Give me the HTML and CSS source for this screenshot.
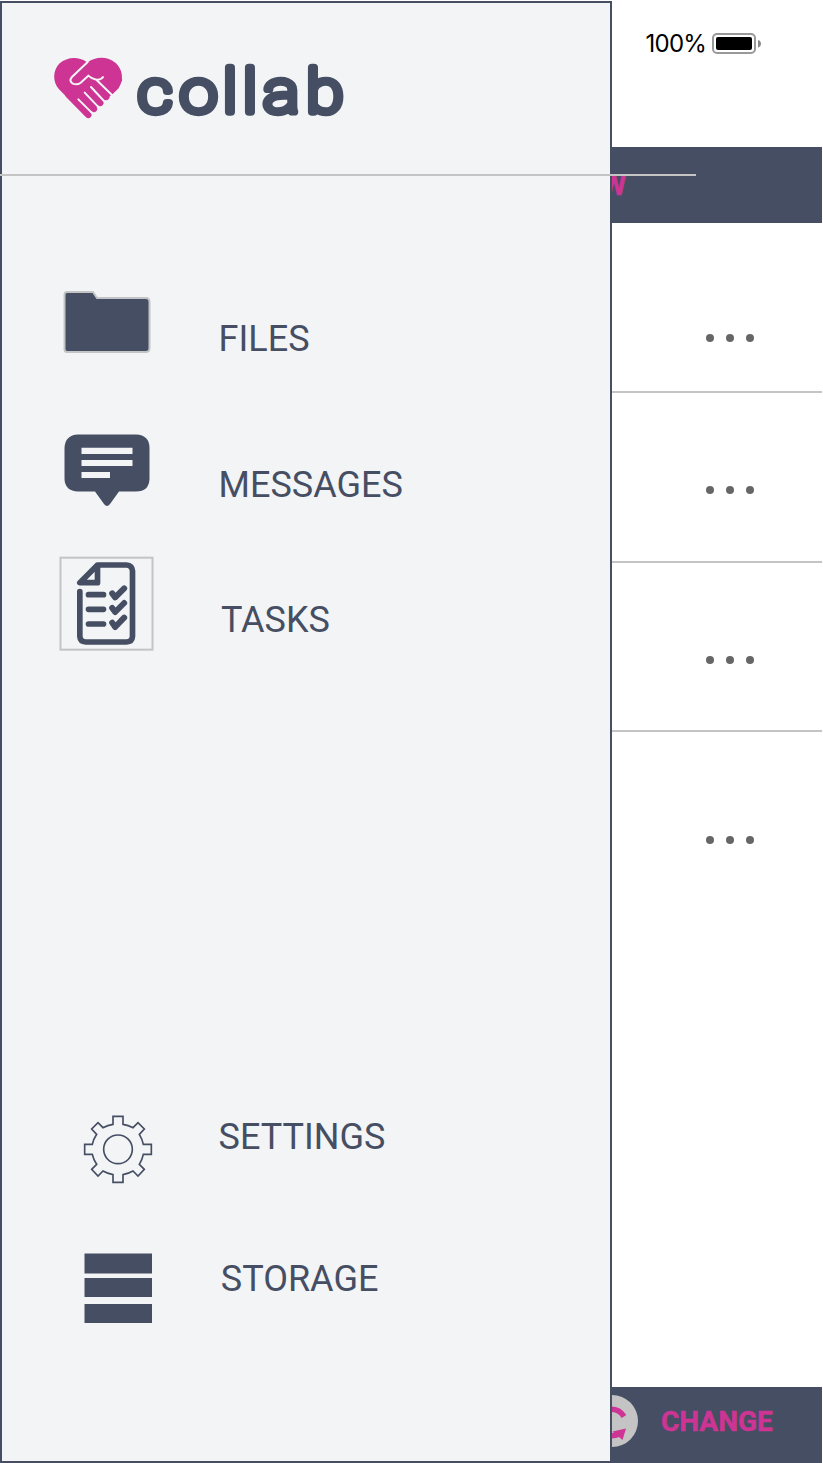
FILE: index.html
```html
<!DOCTYPE html>
<html lang="en">
<head>
<meta charset="utf-8">
<title>collab</title>
<link rel="stylesheet" href="styles.css">
</head>
<body>
<div class="app">
  <main class="page">
    <div class="status"><span>100%</span>
      <svg width="50" height="22" viewBox="0 0 50 22"><rect x="1" y="1" width="42" height="19" rx="4" fill="none" stroke="#999" stroke-width="2"/><rect x="4" y="4" width="36" height="13" rx="2"/><path d="M46 7q3 1 3 3.800t-3 3.800z" fill="#888"/></svg>
    </div>
    <header class="bar top-bar"><span class="bar-label">NEW</span></header>
    <section class="rows">
      <div class="row row-1"><i></i><i></i><i></i></div>
      <div class="row row-2"><i></i><i></i><i></i></div>
      <div class="row row-3"><i></i><i></i><i></i></div>
      <div class="row row-4"><i></i><i></i><i></i></div>
    </section>
    <footer class="bar bottom-bar">
      <svg width="52" height="52" viewBox="0 0 52 52"><circle cx="26" cy="26" r="26" fill="#c4c4c4"/><g fill="none" stroke="#cd3494" stroke-width="5.500"><path d="M11 23A15.500 15.500 0 0 1 38 21.500"/><path d="M12 34Q20 44 34 39"/></g><path d="M26.500 36.500L40 33.500L36.500 45z" fill="#cd3494"/></svg>
      <span class="bar-label">CHANGE</span>
    </footer>
  </main>
  <aside class="drawer">
    <div class="brand">
      <svg width="90" height="80" viewBox="0 0 270 240">
        <path fill="#cd3494" d="M124 41C99 24 65 27 44 46C23 67 22 101 42 124L122 205L194 147L202 140L220 121C237 98 234 66 213 46C187 24 153 25 128 43L124 50Z"/>
        <path fill="#f2f4f6" d="M121 204L207 134L240 110V225H130Z"/>
        <path fill="#cd3494" d="M155 90L202 139L220 121L232 95L210 70Z"/>
        <g stroke="#cd3494" stroke-width="19" stroke-linecap="round"><path d="M70 140L130 201M90 126L147 183M110 108L166 165M130 92L184 147"/></g>
        <g fill="none" stroke="#f2f4f6" stroke-width="6" stroke-linecap="round" stroke-linejoin="round"><path d="M128 42L80 88Q72 98 82 106Q96 113 107 104L130 83Q140 93 154 95Q168 96 174 87M154 95L201 141M100 154L140 194M119 134L159 176M138 117L177 159"/></g>
      </svg>
      <svg class="wordmark" width="230" height="80" viewBox="0 0 230 80"><text transform="scale(1.120 1)" x="17.900 56.600 84.800 102.600 130.500 169.600" y="64.300">collab</text></svg>
    </div>
    <div class="divider"></div>
    <nav class="menu">
      <a class="item files">
        <svg width="88" height="64" viewBox="0 0 88 64"><path d="M1.500 4Q1.500 1 4 1H30L34 7H83Q86.500 7 86.500 11V57Q86.500 61 83 61H4Q1.500 61 1.500 58Z" fill="#464e63" stroke="#c2c4c6" stroke-width="2"/></svg><span>FILES</span>
      </a>
      <a class="item messages">
        <svg width="86" height="73" viewBox="0 0 86 73"><path fill="#464e63" d="M14 .500H72Q85.500 1 85.500 14V45Q85 57.500 72 57.500H55L46 70Q43 74 40 70L31 57.500H14Q1 57 .500 45V14Q1 1 14 .500Z"/><path fill="#f2f4f6" d="M17.500 13.700H68.500V20H17.500ZM17.500 26H68.500V32H17.500ZM17.500 38H46V44H17.500Z"/></svg><span>MESSAGES</span>
      </a>
      <a class="item tasks">
        <svg width="94" height="94" viewBox="27.500 36 282 282"><rect x="32" y="38" width="276" height="276" fill="none" stroke="#c4c4c4" stroke-width="6"/><g fill="none" stroke="#464e63" stroke-width="17" stroke-linecap="round" stroke-linejoin="round"><path d="M90 140V274Q91 290 108 291H230Q247 290 248 274V78Q247 61 230 60H143L90 113H143V60M116 149H161M116 193H161M116 237H161"/><path stroke-width="18" d="M187 145L196 157L223 130M187 189L196 201L223 174M187 233L196 246L223 218"/></g></svg><span>TASKS</span>
      </a>
      <a class="item settings">
        <svg width="68" height="68" viewBox="42 44 204 204"><g fill="none" stroke="#464e63" stroke-width="5"><path d="M129 72V48H159V72Q175 75 189 82L204 67L223 86L208 102Q217 117 220 132H244V162H220Q217 177 208 192L223 207L204 227L189 212Q175 220 159 223V246H129V223Q113 220 99 212L84 227L65 207L80 192Q70 177 67 162H44V132H67Q70 117 80 102L65 86L84 67L99 82Q113 75 129 72Z"/><circle cx="144" cy="147" r="43"/></g></svg><span>SETTINGS</span>
      </a>
      <a class="item storage">
        <svg width="68" height="70" viewBox="0 0 68 70" fill="#464e63"><path d="M.500 .500H68V20.500H.500ZM.500 25H68V44H.500ZM.500 51H68V70H.500Z"/></svg><span>STORAGE</span>
      </a>
    </nav>
  </aside>
</div>
</body>
</html>
```

FILE: styles.css
```css
* { box-sizing: border-box; }
body { margin: 0; background: #fff; font-family: Roboto, sans-serif; }
svg { display: block; flex: none; overflow: visible; }
.app { position: relative; width: 823px; height: 1463px; overflow: hidden; }
.page { display: flex; flex-direction: column; width: 822px; height: 1463px; }
.status { display: flex; align-items: flex-start; justify-content: flex-end; gap: 6px; height: 147px; padding: 33px 60px 0 0; font: 24px/22px Inter, sans-serif; letter-spacing: -0.8px; color: #000; }
.bar { display: flex; background: #464e63; color: #cd3494; }
.bar-label { font-size: 28px; font-weight: 700; line-height: 34px; -webkit-text-stroke: 0.5px #cd3494; }
.top-bar { height: 76px; justify-content: flex-end; padding: 22px 196px 0 0; }
.rows { flex: 1; }
.row { display: flex; align-items: flex-end; justify-content: flex-end; gap: 12px; padding-right: 68px; border-bottom: 2px solid #c4c4c4; }
.row i { width: 8px; height: 8px; border-radius: 50%; background: #666; }
.row-1 { height: 170px; padding-bottom: 49px; }
.row-2 { height: 170px; padding-bottom: 67px; }
.row-3 { height: 169px; padding-bottom: 66px; }
.row-4 { height: 112px; border: 0; }
.bottom-bar { height: 76px; padding: 8px 0 0 586px; gap: 23px; }
.bottom-bar .bar-label { margin-top: 10px; }
.drawer { position: absolute; left: 0; top: 1px; width: 612px; height: 1462px; border: 2px solid #464e63; background: #f2f4f6; }
.brand { display: flex; height: 171px; padding: 45px 0 0 43px; }
.wordmark text { font: 100 60px Roboto, sans-serif; text-anchor: middle; fill: #464e63; stroke: #464e63; stroke-width: 7.4px; stroke-linejoin: round; }
.divider { width: 696px; height: 2px; margin-left: -2px; background: #c4c4c4; position: relative; }
.menu { color: #464e63; font-size: 36px; line-height: 42px; }
.item { display: flex; align-items: flex-start; }
.files { margin-top: 115px; height: 143px; padding-left: 61px; }
.files span { margin: 27px 0 0 67.6px; }
.messages { height: 123px; padding-left: 62px; }
.messages span { margin: 30px 0 0 68.5px; }
.tasks { height: 558px; padding-left: 57px; }
.tasks span { margin: 42px 0 0 68px; }
.settings { height: 138px; padding-left: 82px; }
.settings span { margin: 1px 0 0 66.6px; }
.storage { padding-left: 82px; }
.storage span { margin: 5px 0 0 68.8px; }
```
